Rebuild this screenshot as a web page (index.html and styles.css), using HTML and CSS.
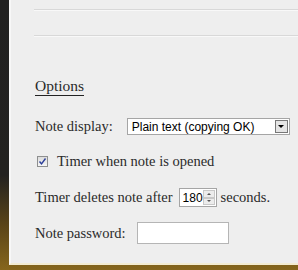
FILE: index.html
```html
<!DOCTYPE html>
<html lang="en">
<head>
    <meta charset="UTF-8">
    <title>Options</title>
    <link rel="stylesheet" href="styles.css">
</head>
<body>
    <div class="panel">
        <div class="rule first"></div>
        <div class="rule"></div>

        <h2 class="options-title">Options</h2>

        <div class="row display-row">
            <label>Note display:</label>
            <div class="select">
                <span class="select-text">Plain text (copying OK)</span>
                <span class="select-btn"><span class="arrow"></span></span>
            </div>
        </div>

        <div class="row check-row">
            <span class="check">
                <svg width="9" height="9" viewBox="0 0 9 9"><path d="M1.5 4.5 L3.5 6.8 L7.5 1.5" fill="none" stroke="#2c3f9a" stroke-width="1.4"/></svg>
            </span>
            <span>Timer when note is opened</span>
        </div>

        <div class="row timer-row">
            <span>Timer deletes note after</span>
            <span class="spin">
                <span class="spin-val">180</span>
                <span class="spin-btns">
                    <span class="up"></span>
                    <span class="down"></span>
                </span>
            </span>
            <span>seconds.</span>
        </div>

        <div class="row pw-row">
            <label>Note password:</label>
            <input class="pw" type="text">
        </div>
    </div>
</body>
</html>
```

FILE: styles.css
```css
body {
    margin: 0;
    height: 270px;
    overflow: hidden;
    background: linear-gradient(#212121 0, #232220 175px, #5a4418 225px, #86661c 270px);
}
.panel {
    display: flow-root;
    margin-left: 9px;
    height: 263px;
    background: #eeeeee;
    border-left: 2px solid #f7f7f7;
    border-bottom: 2px solid #f3ecd2;
    padding-left: 23px;
    font-family: "Liberation Serif", "Times New Roman", serif;
    font-size: 14.5px;
    color: #2a2a2a;
}
.rule {
    height: 1px;
    background: #d8d8d8;
    border-bottom: 1px solid #f8f8f8;
    margin-top: 24px;
}
.rule.first {
    margin-top: 9px;
}
.options-title {
    display: inline-block;
    margin: 40px 0 0 1px;
    font-size: 15.5px;
    font-weight: normal;
    line-height: 17px;
    padding-bottom: 1px;
    border-bottom: 1px solid #222;
}
.row {
    display: flex;
    align-items: center;
    margin-left: 1px;
}
.display-row {
    height: 17px;
    margin-top: 22px;
}
.check-row {
    height: 17px;
    margin-top: 18px;
    margin-left: 3px;
}
.timer-row {
    height: 19px;
    margin-top: 18px;
}
.pw-row {
    height: 22px;
    margin-top: 15px;
}
.row label {
    margin-right: 14px;
}
.pw-row label {
    margin-right: 11px;
}
.select {
    display: flex;
    align-items: center;
    width: 161px;
    height: 15px;
    border: 1px solid #a5a5a5;
    background: #fff;
    font-family: "Liberation Sans", Arial, sans-serif;
    font-size: 12px;
    color: #000;
}
.select-text {
    flex: 1;
    padding-left: 4px;
}
.select-btn {
    width: 11px;
    height: 11px;
    margin-right: 1px;
    border: 1px solid #777;
    background: #e4e4e4;
    display: flex;
    align-items: center;
    justify-content: center;
}
.arrow {
    width: 0;
    height: 0;
    border-left: 3px solid transparent;
    border-right: 3px solid transparent;
    border-top: 3px solid #000;
}
.check {
    width: 9px;
    height: 9px;
    border: 1px solid #8e8f8f;
    background: linear-gradient(#dcdcdc, #f6f6f6);
    margin-right: 9px;
    display: flex;
}
.spin {
    display: flex;
    align-items: center;
    margin: 0 4px 0 6px;
    width: 36px;
    height: 17px;
    border: 1px solid #a5a5a5;
    background: #fff;
    font-family: "Liberation Sans", Arial, sans-serif;
    font-size: 12px;
    color: #000;
}
.spin-val {
    flex: 1;
    padding-left: 3px;
}
.spin-btns {
    width: 12px;
    height: 15px;
    display: flex;
    flex-direction: column;
    margin-right: 1px;
}
.spin-btns span {
    flex: 1;
    background: #ececec;
    border: 1px solid #c8c8c8;
    display: flex;
    align-items: center;
    justify-content: center;
}
.spin-btns .up::after {
    content: "";
    border-left: 2px solid transparent;
    border-right: 2px solid transparent;
    border-bottom: 2px solid #555;
}
.spin-btns .down::after {
    content: "";
    border-left: 2px solid transparent;
    border-right: 2px solid transparent;
    border-top: 2px solid #555;
}
.pw {
    width: 88px;
    height: 18px;
    border: 1px solid #b5b5b5;
    background: #fff;
    padding: 1px;
    box-sizing: content-box;
    margin: 0;
}
```
